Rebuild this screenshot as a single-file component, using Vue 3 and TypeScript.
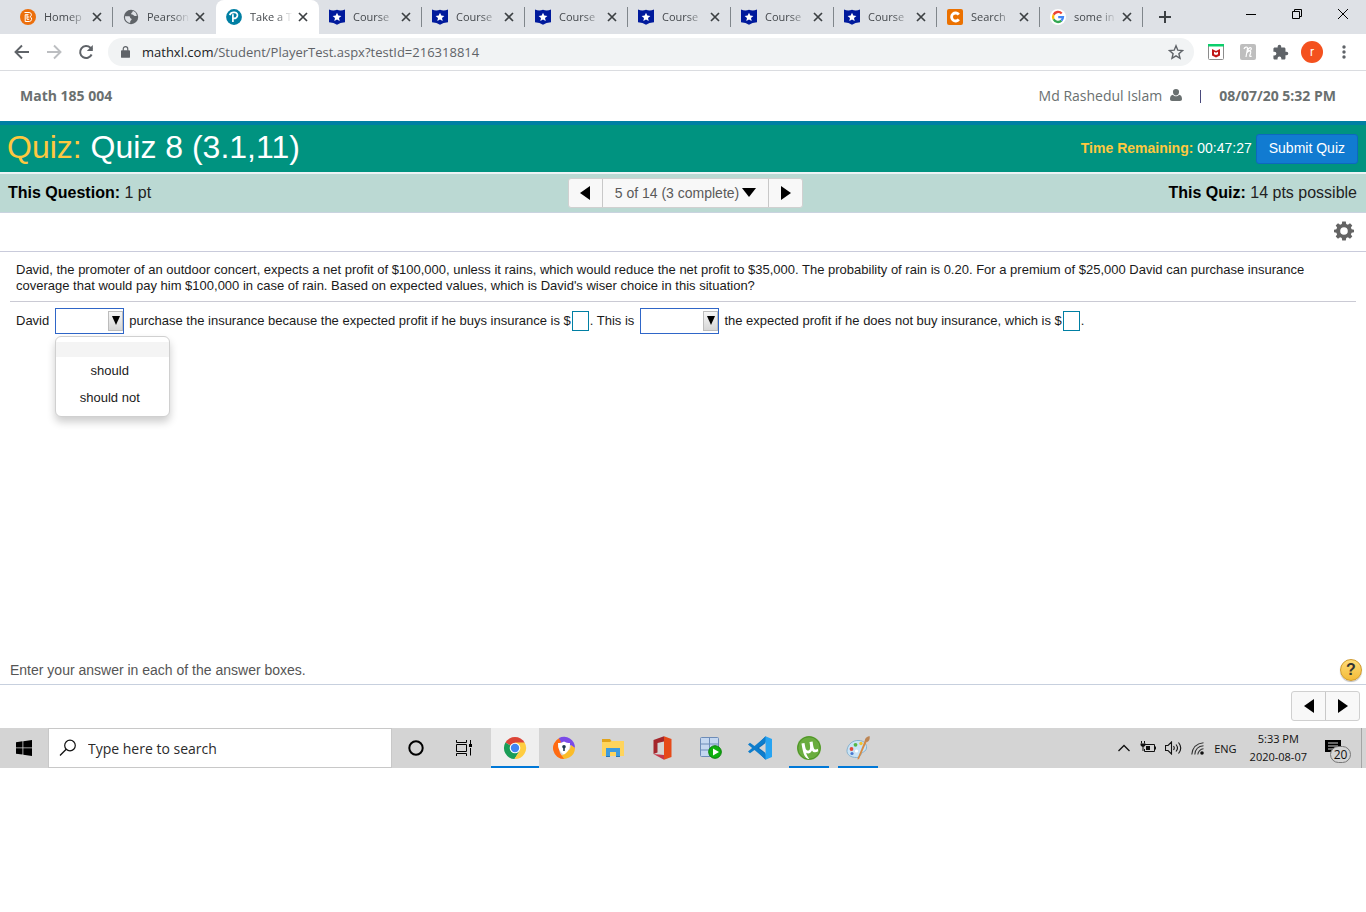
<script setup lang="ts">
import { ref } from 'vue'

type TabIcon = 'b' | 'globe' | 'pearson' | 'course' | 'chegg' | 'google'

interface BrowserTab {
  title: string
  icon: TabIcon
  active?: boolean
}

interface TaskItem {
  name: string
  state?: 'current' | 'open'
}

const tabs: BrowserTab[] = [
  { title: 'Homep', icon: 'b' },
  { title: 'Pearson', icon: 'globe' },
  { title: 'Take a T', icon: 'pearson', active: true },
  { title: 'Course', icon: 'course' },
  { title: 'Course', icon: 'course' },
  { title: 'Course', icon: 'course' },
  { title: 'Course', icon: 'course' },
  { title: 'Course', icon: 'course' },
  { title: 'Course', icon: 'course' },
  { title: 'Search', icon: 'chegg' },
  { title: 'some in', icon: 'google' },
]

const tasks: TaskItem[] = [
  { name: 'Chrome', state: 'current' },
  { name: 'Secure Browser' },
  { name: 'File Explorer' },
  { name: 'Office' },
  { name: 'Server' },
  { name: 'Code' },
  { name: 'uTorrent', state: 'open' },
  { name: 'Paint', state: 'open' },
]

const firstChoice = ref('')
const secondChoice = ref('')
const withInsurance = ref('')
const withoutInsurance = ref('')
const options: string[] = ['', 'should', 'should not']
</script>

<template>
  <div class="screen">
    <header class="tabstrip">
      <div v-for="(tab, i) in tabs" :key="i" class="tab" :class="{ active: tab.active, before: tabs[i + 1]?.active }">
        <svg class="favicon" viewBox="0 0 16 16" aria-hidden="true">
          <template v-if="tab.icon === 'b'">
            <circle cx="8" cy="8" r="8" fill="#ec6f0c" />
            <path d="M4.500 3.500h4.600a2.200 2.200 0 0 1 1 4.200 2.500 2.500 0 0 1-.8 4.800H5.200V5.700h3.300M7 8h2.300M7 10.300h2.200M7 5.800v4.500" fill="none" stroke="#fff" stroke-width="1" />
          </template>
          <template v-else-if="tab.icon === 'globe'">
            <circle cx="8" cy="8" r="7.200" fill="#5f6368" />
            <path d="M9.500 1.800c.8 1.200-.3 1.500-1 2.200-.6.700-.3 1.600.7 1.600 1.300 0 1.300 1.300 2.400 1.300h2.200a6 6 0 0 0-4.300-5.100z" fill="#dee1e6" />
            <path d="M2 7.300h3.800c1 0 1.300.6 1.300 1.300 0 .8.800.9 1.300 1.200.7.500-.2 1.300-.8 1.900-.5.500-.4 1.300-.4 2.200A6 6 0 0 1 2 7.300z" fill="#dee1e6" />
          </template>
          <template v-else-if="tab.icon === 'pearson'">
            <circle cx="8" cy="8" r="7.900" fill="#007fa3" />
            <path d="M6.900 13V5.300M6.600 9.300c5.200 1 6.800-5.200 2-5.900-2.400-.3-4.200.9-4.900 2.700" fill="none" stroke="#fff" stroke-width="1.700" />
          </template>
          <template v-else-if="tab.icon === 'course'">
            <path d="M0 .5Q4 2.500 8 .8 12 2.500 16 .5v12.800Q11 13.500 8 15.800 5 13.500 0 13.300z" fill="#001a9c" />
            <path d="M8 3.700l1.300 2.900 3.100.3-2.400 2.100.7 3.100L8 10.500l-2.700 1.600.7-3.100-2.400-2.100 3.100-.3z" fill="#fff" />
          </template>
          <template v-else-if="tab.icon === 'chegg'">
            <rect width="16" height="16" rx="2" fill="#eb7100" />
            <path d="M11.800 5.600A4 4 0 1 0 11.800 10.400" fill="none" stroke="#fff" stroke-width="2.800" />
          </template>
          <template v-else>
            <circle cx="8" cy="8" r="8" fill="#fff" />
            <g fill="none" stroke-width="2.300">
              <path d="M11.700 4.500A5 5 0 0 0 3.600 5.700" stroke="#ea4335" />
              <path d="M3.600 5.700a5 5 0 0 0 0 4.600" stroke="#fbbc05" />
              <path d="M3.600 10.300a5 5 0 0 0 7.800 1.400" stroke="#34a853" />
              <path d="M11.400 11.700A5 5 0 0 0 13 8.100H8.200" stroke="#4285f4" />
            </g>
          </template>
        </svg>
        <span class="tab-title">{{ tab.title }}</span>
        <button class="tab-close" type="button" aria-label="Close tab">
          <svg viewBox="0 0 12 12" width="12" height="12"><path d="M2 2l8 8M10 2l-8 8" stroke="#3c4043" stroke-width="1.700" /></svg>
        </button>
      </div>
      <button class="new-tab" type="button" aria-label="New tab">
        <svg viewBox="0 0 12 12" width="12" height="12"><path d="M6 0v12M0 6h12" stroke="#3c4043" stroke-width="2" /></svg>
      </button>
      <div class="window-buttons">
        <button type="button" aria-label="Minimize"><svg viewBox="0 0 10 10" width="10" height="10"><path d="M0 5.500h10" stroke="#000" /></svg></button>
        <button type="button" aria-label="Restore"><svg viewBox="0 0 10 10" width="10" height="10"><path d="M.5 2.500h7v7h-7zM2.500 2.500v-2h7v7h-2" fill="none" stroke="#000" /></svg></button>
        <button type="button" aria-label="Close"><svg viewBox="0 0 10 10" width="10" height="10"><path d="M0 0l10 10M10 0L0 10" stroke="#000" /></svg></button>
      </div>
    </header>

    <nav class="toolbar" aria-label="Browser">
      <button type="button" aria-label="Back"><svg viewBox="0 0 16 16" width="16" height="16"><path d="M15 8H2M8 1.500L1.500 8 8 14.500" fill="none" stroke="#5f6368" stroke-width="1.900" /></svg></button>
      <button type="button" aria-label="Forward"><svg viewBox="0 0 16 16" width="16" height="16"><path d="M1 8h13M8 1.500L14.500 8 8 14.500" fill="none" stroke="#bcbec1" stroke-width="1.900" /></svg></button>
      <button type="button" aria-label="Reload"><svg viewBox="0 0 16 16" width="16" height="16"><path d="M13.600 10.500A6 6 0 1 1 12.400 3.800L14 5.500" fill="none" stroke="#5f6368" stroke-width="2" /><path d="M14.800 1v6h-6z" fill="#5f6368" /></svg></button>
      <div class="address">
        <svg viewBox="0 0 10 13" width="9" height="12" aria-hidden="true"><path d="M1 4.500h8a1 1 0 0 1 1 1V12a1 1 0 0 1-1 1H1a1 1 0 0 1-1-1V5.500a1 1 0 0 1 1-1z" fill="#5f6368" /><path d="M2.500 5V3a2.500 2.500 0 0 1 5 0v2" fill="none" stroke="#5f6368" stroke-width="1.300" /></svg>
        <span class="url"><b>mathxl.com</b>/Student/PlayerTest.aspx?testId=216318814</span>
        <button type="button" class="star" aria-label="Bookmark this page"><svg viewBox="0 0 16 16" width="16" height="16"><path d="M8 1.800l1.800 4.400 4.700.4-3.600 3.100 1.100 4.600L8 11.800l-4 2.500 1.100-4.600L1.500 6.600l4.700-.4z" fill="none" stroke="#5f6368" stroke-width="1.400" /></svg></button>
      </div>
      <div class="extensions">
        <button type="button" aria-label="Site advisor"><svg viewBox="0 0 16 16" width="16" height="16"><rect x=".5" y=".5" width="15" height="15" rx="1" fill="#fff" stroke="#8c8c8c" /><path d="M0 0h16v2.500H0z" fill="#0cce6b" /><path d="M4 5l4 2 4-2v6.500l-4 2-4-2z" fill="#c01818" /><path d="M6 7.800l2 1 2-1v2.500l-2 .8-2-.8z" fill="#fff" /></svg></button>
        <button type="button" aria-label="Shopping helper"><svg viewBox="0 0 16 16" width="16" height="16"><rect width="16" height="16" rx="2" fill="#bebebe" /><path d="M4 5c.5-2 3.500-3 3.500-.5L6 13M6.700 9C9 6 11.300 6.500 10.600 9l-.8 2.500c-.2 1.400 1 1.200 1.700.3M7.500 6.500c1.500-3.500 4-3.500 3.800-1.500-.2 1.300-1.800 1.700-3 1.500" fill="none" stroke="#fff" stroke-width="1.200" /></svg></button>
        <button type="button" aria-label="Extensions"><svg viewBox="0 0 24 24" width="17" height="17"><path d="M20.500 11H19V7c0-1.100-.9-2-2-2h-4V3.500a2.500 2.500 0 0 0-5 0V5H4c-1.100 0-2 .9-2 2v3.800h1.500a2.700 2.700 0 0 1 0 5.400H2V20c0 1.100.9 2 2 2h3.800v-1.500a2.700 2.700 0 0 1 5.400 0V22H17c1.100 0 2-.9 2-2v-4h1.500a2.500 2.500 0 0 0 0-5z" fill="#5f6368" /></svg></button>
        <button type="button" class="avatar" aria-label="Profile">r</button>
        <button type="button" aria-label="Menu"><svg viewBox="0 0 4 14" width="4" height="14"><g fill="#5f6368"><circle cx="2" cy="2" r="1.700" /><circle cx="2" cy="7" r="1.700" /><circle cx="2" cy="12" r="1.700" /></g></svg></button>
      </div>
    </nav>

    <main class="page">
      <div class="course-bar">
        <strong>Math 185 004</strong>
        <div class="account">
          <span>Md Rashedul Islam</span>
          <svg viewBox="0 0 12 12" width="12" height="12" aria-hidden="true"><path d="M6 0a3 3 0 0 1 3 3.300C9 5 7.800 6.600 6 6.600S3 5 3 3.300A3 3 0 0 1 6 0zM3 5.800c.8 1 1.800 1.500 3 1.500s2.200-.5 3-1.500c2.100.2 3 2 3 4.200 0 1.200-.7 2-2 2H2c-1.300 0-2-.8-2-2 0-2.200.9-4 3-4.200z" fill="#6a7070" /></svg>
          <i class="divider"></i>
          <strong>08/07/20 5:32 PM</strong>
        </div>
      </div>

      <div class="quiz-bar">
        <h1><span>Quiz:</span> Quiz 8 (3.1,11)</h1>
        <div class="timer">
          <p><b>Time Remaining:</b> 00:47:27</p>
          <button type="button">Submit Quiz</button>
        </div>
      </div>

      <div class="question-bar">
        <p><b>This Question:</b> 1 pt</p>
        <div class="pager">
          <button type="button" aria-label="Previous question"><svg viewBox="0 0 10 14" width="10" height="14"><path d="M10 0v14L0 7z" /></svg></button>
          <button type="button" class="pager-list">5 of 14 (3 complete)<svg viewBox="0 0 14 10" width="14" height="10"><path d="M0 0h14L7 9z" /></svg></button>
          <button type="button" aria-label="Next question"><svg viewBox="0 0 10 14" width="10" height="14"><path d="M0 0v14l10-7z" /></svg></button>
        </div>
        <p class="right"><b>This Quiz:</b> 14 pts possible</p>
      </div>

      <div class="settings">
        <button type="button" aria-label="Settings"><svg viewBox="0 0 20 20" width="20" height="20"><path d="M8.200.5h3.600l.4 2.500 1.700.7 2.100-1.500 2.300 2.300-1.400 2.100.7 1.700 2.400.4v2.600l-2.400.4-.7 1.700 1.400 2.100-2.300 2.300-2.100-1.500-1.700.7-.4 2.500H8.200L7.800 17l-1.700-.7L4 17.800l-2.300-2.300 1.400-2.100-.7-1.700L0 11.300V8.700l2.400-.4.7-1.700-1.400-2.100L4 2.200l2.100 1.500L7.800 3zM10 6.200a3.800 3.800 0 1 0 0 7.600 3.800 3.800 0 0 0 0-7.600z" fill="#646464" fill-rule="evenodd" /></svg></button>
      </div>

      <section class="exercise">
        <p class="prompt">David, the promoter of an outdoor concert, expects a net profit of $100,000, unless it rains, which would reduce the net profit to $35,000. The probability of rain is 0.20. For a premium of $25,000 David can purchase insurance coverage that would pay him $100,000 in case of rain. Based on expected values, which is David's wiser choice in this situation?</p>
        <div class="answer-line">
          <span>David</span>
          <div class="choice">
            <select v-model="firstChoice" aria-label="Should or should not">
              <option v-for="o in options" :key="o" :value="o">{{ o }}</option>
            </select>
            <span class="choice-arrow"><svg viewBox="0 0 8 9" width="8" height="9"><path d="M0 0h8L4 9z" /></svg></span>
            <ul class="menu" role="listbox" aria-label="Choices">
              <li v-for="o in options" :key="o" role="option" :class="{ blank: o === '' }" :aria-selected="o === firstChoice" @click="firstChoice = o">{{ o }}</li>
            </ul>
          </div>
          <span>purchase the insurance because the expected profit if he buys insurance is $</span>
          <input v-model="withInsurance" type="text" aria-label="Expected profit with insurance">
          <span>. This is</span>
          <div class="choice wide">
            <select v-model="secondChoice" aria-label="Comparison">
              <option value=""></option>
            </select>
            <span class="choice-arrow"><svg viewBox="0 0 8 9" width="8" height="9"><path d="M0 0h8L4 9z" /></svg></span>
          </div>
          <span>the expected profit if he does not buy insurance, which is $</span>
          <input v-model="withoutInsurance" type="text" aria-label="Expected profit without insurance">
          <span>.</span>
        </div>
      </section>

      <div class="hint">
        <p>Enter your answer in each of the answer boxes.</p>
        <button type="button" aria-label="Help">?</button>
      </div>
      <div class="footer-nav">
        <div class="pager">
          <button type="button" aria-label="Previous"><svg viewBox="0 0 10 14" width="10" height="14"><path d="M10 0v14L0 7z" /></svg></button>
          <button type="button" aria-label="Next"><svg viewBox="0 0 10 14" width="10" height="14"><path d="M0 0v14l10-7z" /></svg></button>
        </div>
      </div>
    </main>

    <footer class="taskbar">
      <button class="task start" type="button" aria-label="Start"><svg viewBox="0 0 16 16" width="16" height="16"><path d="M0 2.200L6.500 1.300v6.200H0zM7.300 1.200L16 0v7.500H7.300zM0 8.300h6.500v6.300L0 13.800zM7.300 8.300H16V16l-8.700-1.200z" /></svg></button>
      <label class="search">
        <svg viewBox="0 0 18 18" width="18" height="18" aria-hidden="true"><circle cx="11" cy="6.500" r="5.300" fill="none" stroke="#111" stroke-width="1.200" /><path d="M7.200 10.300L1 16.500" stroke="#111" stroke-width="1.300" /></svg>
        <input type="text" placeholder="Type here to search" aria-label="Search">
      </label>
      <button class="task" type="button" aria-label="Cortana"><svg viewBox="0 0 16 16" width="16" height="16"><circle cx="8" cy="8" r="6.700" fill="none" stroke="#000" stroke-width="2" /></svg></button>
      <button class="task view" type="button" aria-label="Task view"><svg viewBox="0 0 16 16" width="16" height="16"><path d="M.5 0v2.500h10V0M.5 16v-2.500h10V16M.5 4.500h10v7H.5zM14.500 0v4M14.500 8v7.500" fill="none" stroke="#000" /><path d="M13 4h3v3h-3z" /></svg></button>
      <button v-for="t in tasks" :key="t.name" class="task app" :class="t.state" type="button" :aria-label="t.name">
        <svg viewBox="0 0 24 24" width="24" height="24">
          <template v-if="t.name === 'Chrome'">
            <path d="M12 12L2.400 6.500A11.100 11.100 0 0 1 21.600 6.500z" fill="#dc4437" />
            <path d="M12 12L2.400 6.500A11.100 11.100 0 0 0 11.500 23.100L17 14.500z" fill="#1a9d57" />
            <path d="M12 6.500h9.600A11.100 11.100 0 0 1 11.500 23.100L17 14z" fill="#ffcd41" />
            <circle cx="12" cy="12" r="5.300" fill="#fff" /><circle cx="12" cy="12" r="4.200" fill="#4285f4" />
          </template>
          <template v-else-if="t.name === 'Secure Browser'">
            <path d="M7 2a11 11 0 0 1 16 10l-5-3-6-3-5 2z" fill="#7b4be8" />
            <path d="M23 12A11 11 0 0 1 6 21l5-2 7-6 1-4z" fill="#fbbc28" />
            <path d="M12 23A11 11 0 0 1 7 2.200L9 6l-3 4 2 7z" fill="#ff6b12" />
            <path d="M12 5.500c2 1.300 4 1.500 6 1.500 0 5-1.500 9-6 11.500-4.500-2.500-6-6.500-6-11.500 2 0 4-.2 6-1.500z" fill="#fff" />
            <circle cx="12" cy="10.800" r="1.800" fill="#203a50" /><path d="M11.200 11h1.600v4h-1.600z" fill="#203a50" />
          </template>
          <template v-else-if="t.name === 'File Explorer'">
            <path d="M1 3h8l1.500 2H23v4H1z" fill="#e2a41b" /><path d="M1 6h8l1.500-1H23v15H1z" fill="#ffd45c" />
            <path d="M5 12h14v9h-4v-5H9v5H5z" fill="#3f9bdc" /><path d="M5 20h4v1H5zM15 20h4v1h-4z" fill="#2577b5" />
          </template>
          <template v-else-if="t.name === 'Office'">
            <path d="M14 .3L3.500 4v14l4-1.500V7L14 5.500z" fill="#a4262c" /><path d="M14 .3L21.500 3v18L14 23.800z" fill="#e64a19" />
            <path d="M3.500 18L14 19v4.800z" fill="#c8374a" />
          </template>
          <template v-else-if="t.name === 'Server'">
            <rect x="1.500" y="1.500" width="18" height="19" rx="1" fill="#c4d7f0" stroke="#6d8cb8" />
            <path d="M2 8h17M2 14h17M10.500 2v18" stroke="#6d8cb8" />
            <circle cx="16" cy="16" r="6.300" fill="#0fb00f" stroke="#078007" /><path d="M14 12.500v7l6-3.500z" fill="#fff" />
          </template>
          <template v-else-if="t.name === 'Code'">
            <path d="M17.500.3L6 12l11.500 11.700z" fill="#0a70bd" /><path d="M0 8.500l2-1.800L18 18.500v5.200z" fill="#0e7dcc" /><path d="M0 15.500l2 1.800L18 5.500V.3z" fill="#0e7dcc" />
            <path d="M17.500.3L24 3v18l-6.500 2.700z" fill="#27a4f2" /><path d="M17.500 7v10L11 12z" fill="#d4d4d4" />
          </template>
          <template v-else-if="t.name === 'uTorrent'">
            <circle cx="12" cy="12" r="12" fill="#6aad3e" /><circle cx="12" cy="12" r="11.200" fill="none" stroke="#4f922a" />
            <path d="M4.500 7.500l3-.6c.8 5 1.300 7.600 3.500 7.600 2.300 0 2.600-2.400 1.500-8.500l3.100-.6c.7 5 1 7.300 2.500 8 1 .4 2-.1 2.800-.7l.3 2.600c-2.600 1.800-5.300 1.200-6.200-.8-1.400 3-4 3.800-5.800 2.300.3 1.800 1.300 4 3.300 6.500-4.800-1-6.200-4.500-8-15.800z" fill="#fff" />
          </template>
          <template v-else>
            <path d="M1 14C2 8 7 4 13 4.500c5 .3 8 3.500 7.500 7.500-.5 3-2.500 3.500-4 4.500-2 1.500-1.500 5-6 5C5 21.500.5 19 1 14z" fill="#c9e3f5" stroke="#75a7c9" stroke-width=".8" />
            <circle cx="5.500" cy="13" r="1.900" fill="#e5483a" /><circle cx="9.500" cy="8.800" r="1.900" fill="#55b748" /><circle cx="15" cy="7.500" r="1.700" fill="#f2c230" /><circle cx="6" cy="17.500" r="1.600" fill="#4b78d1" /><circle cx="10.500" cy="15" r="1.600" fill="#fff" />
            <path d="M21 5l-8 18-1.500.5.200-1.500L19 4z" fill="#d68a42" /><path d="M19 5c-.5-2 1-4 4.500-5 .8 3-.5 5.500-2.500 6z" fill="#bd8553" />
          </template>
        </svg>
      </button>
      <div class="tray">
        <svg class="caret" viewBox="0 0 12 12" width="12" height="12"><path d="M.5 9L6 3.500 11.500 9" fill="none" stroke="#111" stroke-width="1.300" /></svg>
        <svg viewBox="0 0 16 14" width="16" height="14"><path d="M5 3.500h9.500v7H4.500V8M15.500 5.500v3M1.500 0v2.500M4.500 0v2.500M3 5v5" fill="none" stroke="#111" /><path d="M.5 2.500h5v1.700L4 5.700H2L.5 4.200zM6 5h4v4H6z" fill="#111" /></svg>
        <svg viewBox="0 0 17 14" width="17" height="14"><path d="M.5 4.500H3l3.500-3.500v12L3 9.500H.5zM8.500 5q1.500 2 0 4M11 3.500q3 3.500 0 7M13.500 1.500q4.500 5.500 0 11" fill="none" stroke="#111" stroke-width="1.100" /></svg>
        <svg viewBox="0 0 13 13" width="13" height="13"><path d="M.8 12.500C1.500 5.500 5.500 1.500 12.500.8M3.800 12.500C4.200 7.500 7.500 4.200 12.500 3.800M6.800 12.500c.2-3 2.700-5.500 5.700-5.700" fill="none" stroke="#333" stroke-width="1.100" /><circle cx="11" cy="11" r="1.800" fill="#111" /></svg>
        <span class="lang">ENG</span>
        <time>5:33 PM<br>2020-08-07</time>
        <div class="notices">
          <svg viewBox="0 0 16 16" width="16" height="16"><path d="M0 0h16v12h-5l-3 3.500V12H0z" /><path d="M3 3h10M3 6h10M3 9h10" stroke="#d4d4d4" /></svg>
          <span>20</span>
        </div>
        <i class="peek"></i>
      </div>
    </footer>
  </div>
</template>

<style>
body { margin: 0; background: #fff; }
</style>

<style scoped>
.screen { font-family: "Liberation Sans", Arial, sans-serif; color: #000; background: #fff; }
.screen * { box-sizing: border-box; }
.screen svg { display: block; flex: none; }
button { border: 0; padding: 0; background: none; font: inherit; color: inherit; display: flex; align-items: center; justify-content: center; }
p, h1, ul { margin: 0; padding: 0; }

.tabstrip { display: flex; height: 34px; padding-left: 10px; background: #dee1e6; }
.tab { display: flex; align-items: center; width: 103px; padding: 0 10px 1px; position: relative; font: 11px "Open Sans", sans-serif; color: #45494d; }
.tab::after { content: ""; position: absolute; right: 0; top: 7px; width: 1px; height: 20px; background: #80868b; }
.tab.active { background: #fff; border-radius: 8px 8px 0 0; }
.tab.active::after, .tab.before::after { display: none; }
.favicon { width: 16px; height: 16px; }
.tab-title { flex: 1; min-width: 0; margin: 0 2px 0 8px; overflow: hidden; white-space: nowrap; mask-image: linear-gradient(90deg, #000 55%, transparent 95%); }
.new-tab { width: 44px; }
.window-buttons { display: flex; margin-left: auto; height: 28px; }
.window-buttons button { width: 46px; }

.toolbar { display: flex; align-items: center; height: 37px; padding: 0 12px 0 6px; background: #fff; border-bottom: 1px solid #dadce0; }
.toolbar button { width: 32px; height: 28px; }
.address { flex: 1; display: flex; align-items: center; height: 28px; margin-left: 6px; padding: 0 2px 0 13px; border-radius: 14px; background: #f1f3f4; }
.url { flex: 1; margin-left: 12px; font: 13px "Open Sans", sans-serif; color: #5f6368; white-space: nowrap; }
.url b { font-weight: 400; color: #202124; }
.extensions { display: flex; align-items: center; margin-left: 6px; }
.toolbar .avatar { width: 22px; height: 22px; margin: 0 5px; border-radius: 50%; background: #f4511e; color: #fff; font: 12px Roboto, sans-serif; }
.extensions button:last-child { width: 32px; margin-right: -6px; }

.course-bar { display: flex; align-items: center; justify-content: space-between; height: 50px; padding: 0 30px 2px 20px; font: 14px "Open Sans", sans-serif; color: #6a7070; }
.course-bar strong { font-weight: 700; }
.account { display: flex; align-items: center; }
.account svg { margin-left: 8px; }
.divider { width: 1px; height: 13px; margin: 2px 18px 0; background: #4a4a7c; }

.quiz-bar { display: flex; align-items: center; justify-content: space-between; height: 51px; padding: 0 8px 0 7px; border-top: 4px solid #007fa3; background: #009380; color: #fff; }
.quiz-bar h1 { padding-bottom: 4px; font-size: 32px; line-height: 40px; font-weight: 400; }
.quiz-bar h1 span, .timer b { color: #ffc83f; }
.timer { display: flex; align-items: center; gap: 4px; font-size: 14px; }
.timer p { padding-bottom: 2px; }
.timer button { height: 30px; padding: 0 12px 2px; border: 1px solid #0d68bf; border-radius: 3px; background: #117bd1; }

.question-bar { display: grid; grid-template-columns: 1fr auto 1fr; align-items: center; height: 41px; padding: 0 9px 0 8px; border-top: 2px solid #edf3f5; border-bottom: 1px solid #c9d3df; background: #bbd9d3; font-size: 16px; color: #222; }
.question-bar b { color: #000; }
.question-bar .right { text-align: right; }
.pager { display: flex; border: 1px solid #d0d0d0; border-radius: 3px; background: #f8f8f8; font-size: 14px; color: #5a5a5a; }
.question-bar .pager { margin-left: 6px; }
.pager button { width: 33px; height: 28px; }
.pager button + button { width: 34px; border-left: 1px solid #c8c8c8; }
.pager button.pager-list { width: auto; padding: 0 12px; gap: 3px; }

.settings { display: flex; justify-content: flex-end; align-items: center; height: 39px; padding: 0 12px 2px 0; border-bottom: 1px solid #c9cbdb; }

.exercise { min-height: 404px; padding: 10px 10px 0; font-size: 13px; line-height: 16px; color: #1a1a1a; }
.prompt { padding: 0 6px 7px; border-bottom: 1px solid #cacad4; }
.answer-line { display: flex; align-items: center; padding: 6px 6px 0; white-space: nowrap; }
.choice { position: relative; width: 69px; height: 26px; margin: 0 5px 0 6px; }
.choice.wide { width: 79px; }
.choice select { display: block; width: 100%; height: 100%; margin: 0; appearance: none; border: 1px solid #2f66c8; border-radius: 0; background: #fff; font: inherit; }
.choice-arrow { position: absolute; top: 3px; right: 1px; display: flex; justify-content: center; width: 15px; height: 20px; padding-top: 4px; border: 1px solid #bcbcbc; background: linear-gradient(#f6f6f6, #d6d6d6); pointer-events: none; }
.answer-line > input { width: 17px; height: 20px; margin: 0 1px; padding: 0; border: 1px solid #007fa3; background: #fff; font: inherit; }
.menu { position: absolute; z-index: 2; top: 28px; left: 0; width: 115px; padding: 5px 0; border: 1px solid #d0d0d0; border-radius: 6px; background: #fff; box-shadow: 0 5px 9px rgba(0, 0, 0, .2); list-style: none; }
.menu li { height: 27px; padding-right: 6px; line-height: 27px; text-align: center; }
.menu li.blank { height: 15px; background: #f4f4f4; }

.hint { display: flex; align-items: center; justify-content: space-between; height: 29px; padding: 0 4px 0 10px; border-bottom: 1px solid #c7d0de; font-size: 14px; color: #555; }
.hint button { width: 22px; height: 22px; border: 1px solid #d09a2c; border-radius: 50%; background: linear-gradient(#ffdc77, #f3bb38); color: #333; font-weight: 700; font-size: 16px; box-shadow: 0 1px 1px #bbb; }
.footer-nav { display: flex; justify-content: flex-end; padding: 6px 6px 7px; }

.taskbar { display: flex; height: 40px; background: #d4d4d4; }
.task { width: 48px; flex: none; }
.view { margin-right: 3px; }
.search { display: flex; align-items: center; width: 344px; padding: 0 10px; border: 1px solid #c8c8c8; background: #fff; }
.search input { flex: 1; min-width: 0; margin-left: 11px; padding: 0; border: 0; outline: 0; background: none; font: 14px "Open Sans", sans-serif; }
.search input::placeholder { color: #2b2b2b; opacity: 1; }
.app { position: relative; margin-right: 1px; }
.app.current { background: #efefef; }
.app.current::after, .app.open::after { content: ""; position: absolute; left: 4px; right: 4px; bottom: 0; height: 2px; background: #0078d7; }
.app.current::after { left: 0; right: 0; }
.tray { display: flex; align-items: center; gap: 9px; margin-left: auto; font: 11px "Open Sans", sans-serif; color: #111; }
.caret { margin-right: 1px; }
.lang { margin-left: 1px; }
.tray time { margin-left: 4px; line-height: 18px; text-align: center; white-space: nowrap; }
.notices { position: relative; margin: 0 11px 0 9px; }
.notices span { position: absolute; left: 5px; top: 6px; width: 21px; height: 17px; border: 1px solid #777; border-radius: 9px; background: #d4d4d4; font-size: 12px; line-height: 15px; text-align: center; }
.peek { align-self: stretch; width: 5px; border-left: 1px solid #a5a5a5; }
</style>
